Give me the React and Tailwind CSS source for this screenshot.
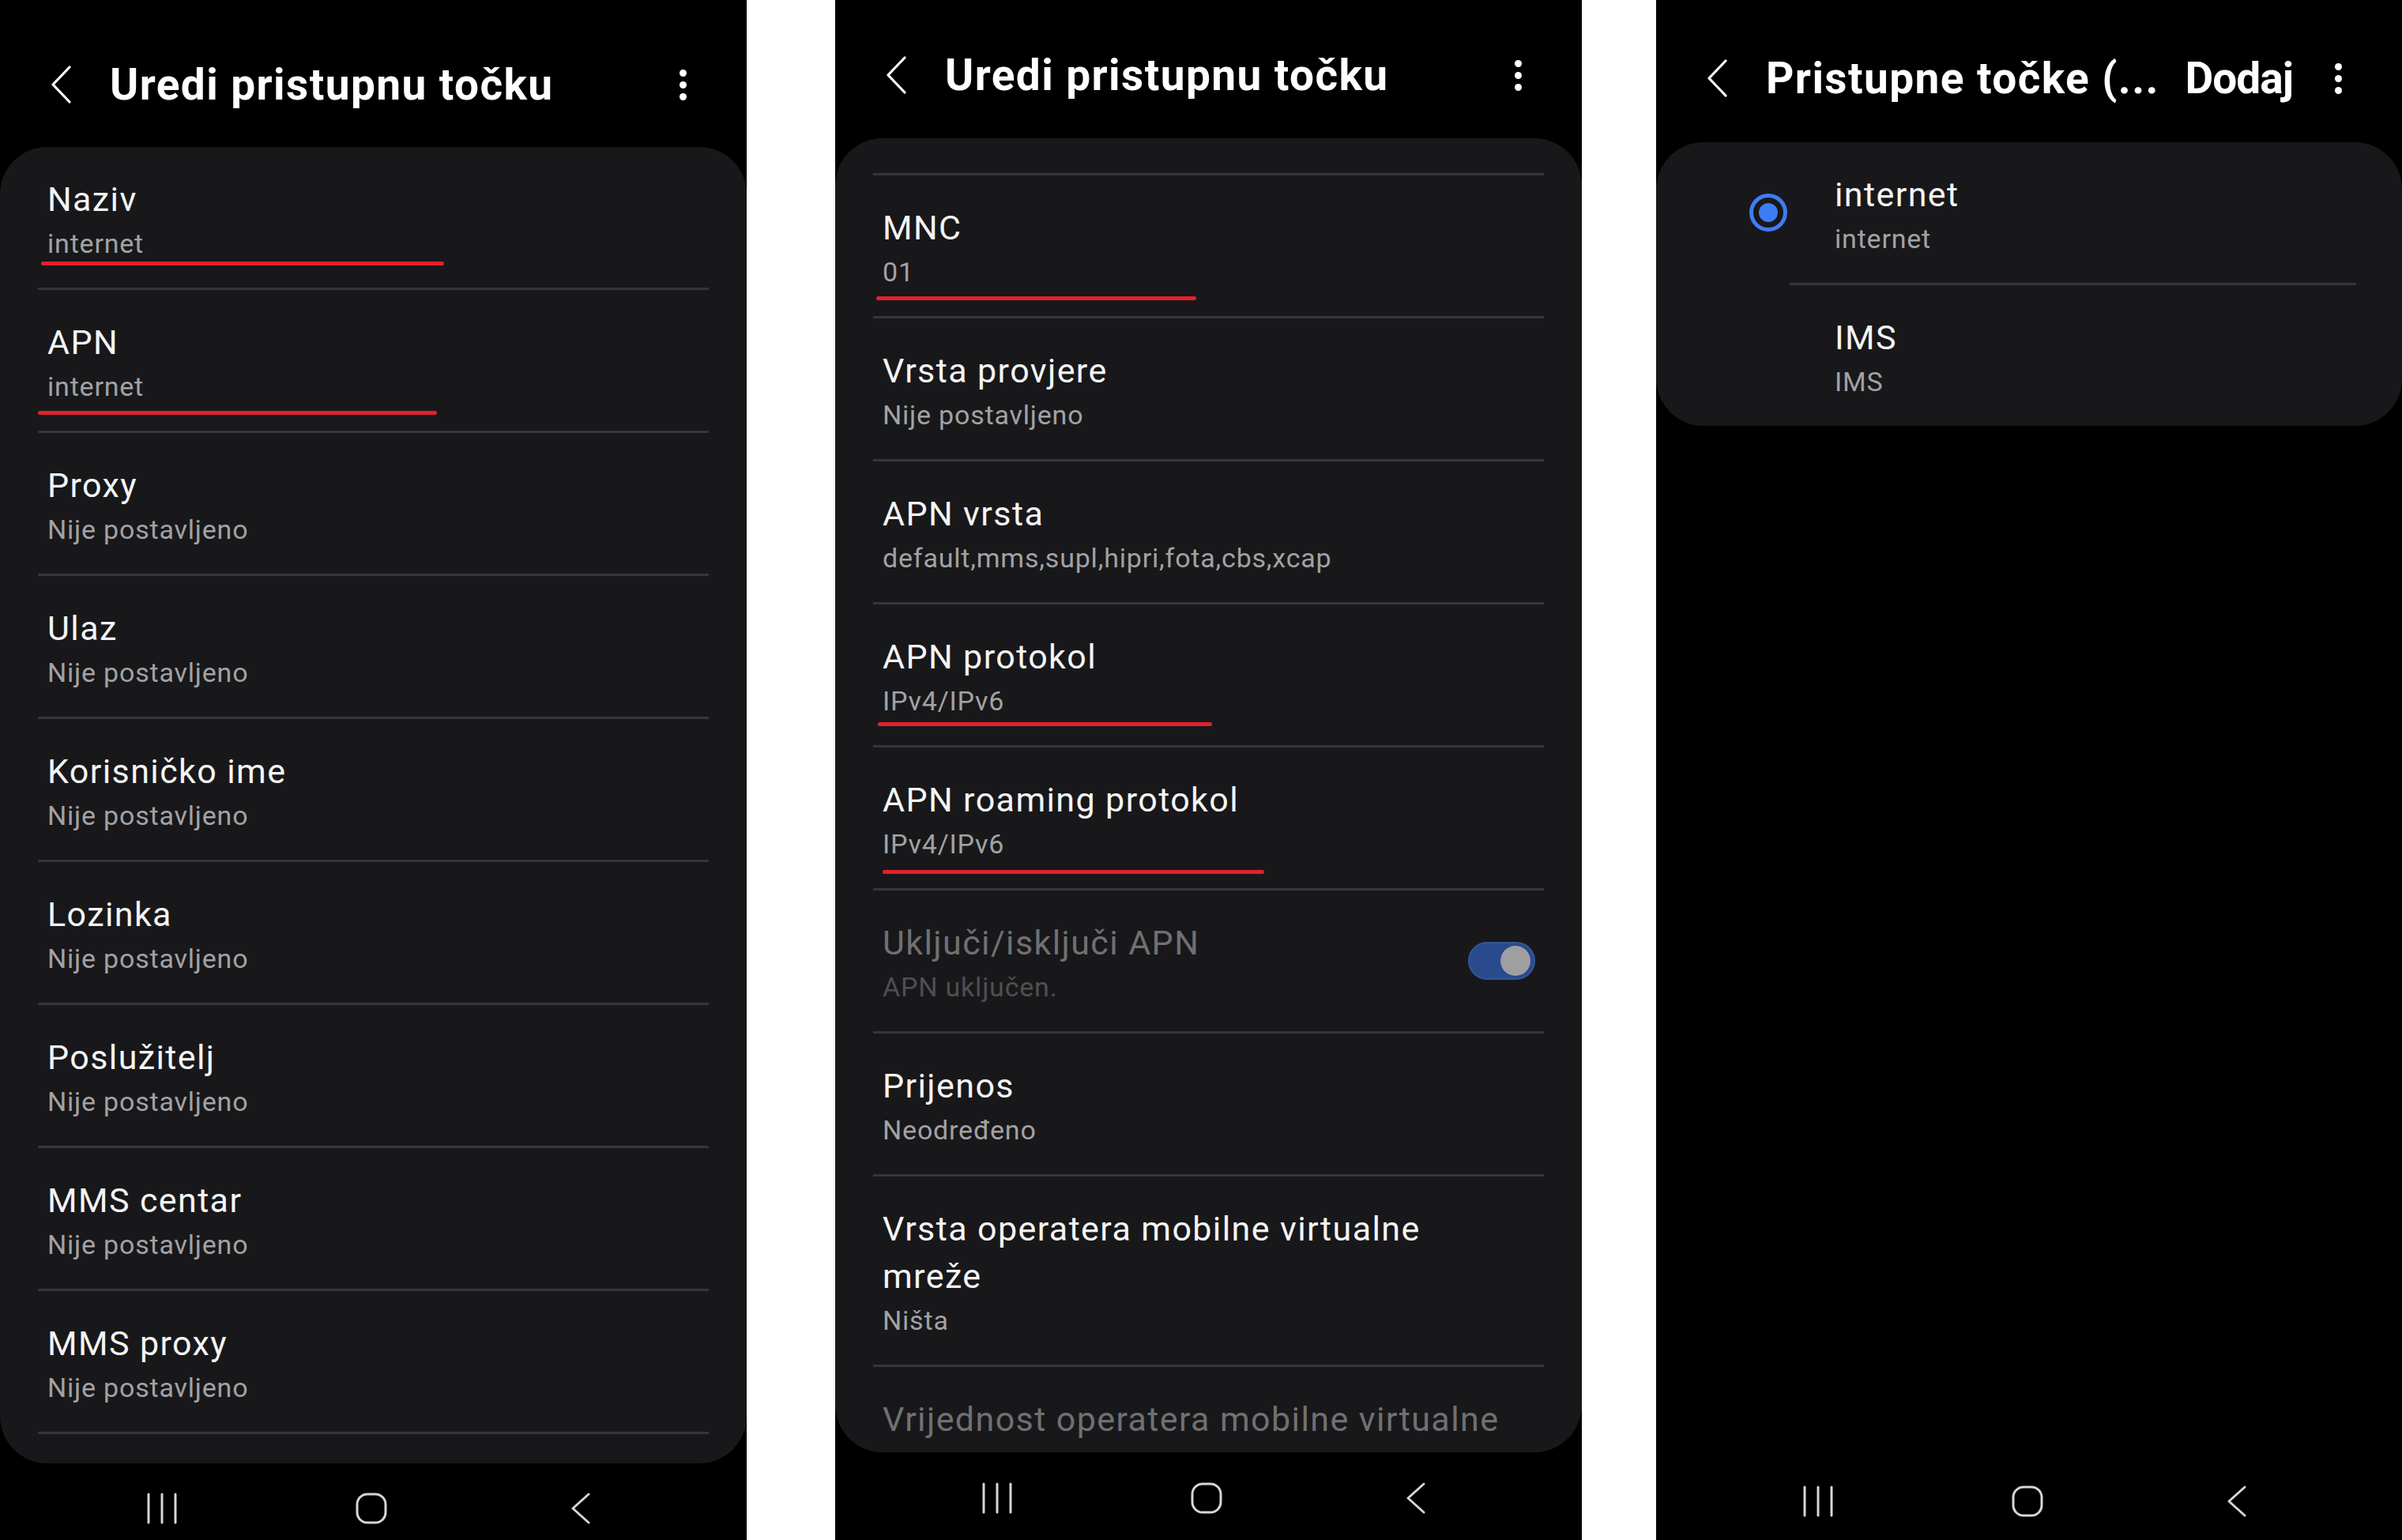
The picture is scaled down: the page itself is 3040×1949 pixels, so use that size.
import React from "react";

const FONT = "font-['Roboto','Liberation_Sans',sans-serif]";

// --- icons ---
function Chevron({ className = "" }) {
  return (
    <svg width="27" height="48" viewBox="0 0 27 48" fill="none" className={className}>
      <polyline
        points="24,2 3,24 24,46"
        stroke="currentColor"
        strokeWidth="3.2"
        strokeLinecap="round"
        strokeLinejoin="round"
      />
    </svg>
  );
}

function Kebab() {
  return (
    <div className="flex w-[10px] flex-col items-center gap-[6px]">
      <span className="h-[9px] w-[9px] rounded-full bg-white" />
      <span className="h-[9px] w-[9px] rounded-full bg-white" />
      <span className="h-[9px] w-[9px] rounded-full bg-white" />
    </div>
  );
}

function NavBar({ mb }) {
  return (
    <div className={`mt-auto flex h-[80px] items-center pl-[155px] gap-[165px] text-[#d6d6d6] ${mb}`}>
      <div className="flex w-[100px] justify-center">
        <svg width="40" height="40" viewBox="0 0 40 40" fill="none">
          <path d="M3 2v36M20 2v36M37 2v36" stroke="currentColor" strokeWidth="3" strokeLinecap="round" />
        </svg>
      </div>
      <div className="flex w-[100px] justify-center">
        <svg width="40" height="40" viewBox="0 0 40 40" fill="none">
          <rect x="2" y="2" width="36" height="36" rx="13" stroke="currentColor" strokeWidth="3" />
        </svg>
      </div>
      <div className="flex w-[100px] justify-center">
        <svg width="26" height="40" viewBox="0 0 26 40" fill="none">
          <polyline points="23,2 3,20 23,38" stroke="currentColor" strokeWidth="3" strokeLinecap="round" strokeLinejoin="round" />
        </svg>
      </div>
    </div>
  );
}

function Header({ title, h, pt, action }) {
  return (
    <div className={`${h} ${pt} shrink-0`}>
      <div className="flex h-[60px] items-center pl-[64px] pr-[76px] text-white">
        <Chevron />
        <div className="ml-[48px] flex-1 whitespace-nowrap text-[55px] font-bold leading-[60px] tracking-[1.4px]">
          {title}
        </div>
        {action && (
          <div className="mr-[52px] text-[55px] font-bold leading-[60px] tracking-[-1px]">{action}</div>
        )}
        <Kebab />
      </div>
    </div>
  );
}

function Divider() {
  return <div className="mx-[48px] h-[3px] bg-[#363638]" />;
}

const TITLE = "text-[43px] leading-[60px] tracking-[1.4px]";
const SUB = "text-[34px] leading-[52px] tracking-[0.8px]";

function Row({ title, sub, red, disabled, toggle, divider = true }) {
  return (
    <div>
      <div className="relative flex items-center pr-[59px]">
        <div className="flex-1 pl-[60px] pt-[36px] pb-[30px]">
          <div className={`whitespace-nowrap ${TITLE} ${disabled ? "text-[#707072]" : "text-[#f4f4f4]"}`}>
            {title}
          </div>
          {sub && (
            <div className={`${SUB} ${disabled ? "text-[#4f4f51]" : "text-[#a2a2a4]"}`}>{sub}</div>
          )}
        </div>
        {toggle && (
          <div className="flex h-[48px] w-[85px] items-center justify-end rounded-full border-[2px] border-[#34559c] bg-[#2a4a8e] pr-[4px]">
            <span className="h-[38px] w-[38px] rounded-full bg-[#9f9fa1]" />
          </div>
        )}
        {red && (
          <span
            className="absolute h-[5px] rounded-full bg-[#e3212b]"
            style={{ left: red.left, width: red.width, top: 120 + red.dy }}
          />
        )}
      </div>
      {divider && <Divider />}
    </div>
  );
}

const NS = "Nije postavljeno";

export default function App() {
  return (
    <div className={`flex h-[1949px] w-[3040px] bg-white ${FONT}`}>
      {/* PANEL 1 */}
      <div className="flex h-full w-[945px] flex-col bg-black">
        <Header title="Uredi pristupnu točku" h="h-[186px]" pt="pt-[77px]" />
        <div className="h-[1666px] shrink-0 overflow-hidden rounded-[60px] bg-[#18181a]">
          <Row title="Naziv" sub="internet" red={{ left: 52, width: 510, dy: 25 }} />
          <Row title="APN" sub="internet" red={{ left: 48, width: 505, dy: 33 }} />
          <Row title="Proxy" sub={NS} />
          <Row title="Ulaz" sub={NS} />
          <Row title="Korisničko ime" sub={NS} />
          <Row title="Lozinka" sub={NS} />
          <Row title="Poslužitelj" sub={NS} />
          <Row title="MMS centar" sub={NS} />
          <Row title="MMS proxy" sub={NS} />
        </div>
        <NavBar mb="mb-0" />
      </div>

      <div className="w-[112px] shrink-0" />

      {/* PANEL 2 */}
      <div className="flex h-full w-[945px] flex-col bg-black">
        <Header title="Uredi pristupnu točku" h="h-[175px]" pt="pt-[65px]" />
        <div className="h-[1663px] shrink-0 overflow-hidden rounded-[60px] bg-[#18181a]">
          <div className="h-[44px]" />
          <Divider />
          <Row title="MNC" sub="01" red={{ left: 52, width: 405, dy: 33 }} />
          <Row title="Vrsta provjere" sub={NS} />
          <Row title="APN vrsta" sub="default,mms,supl,hipri,fota,cbs,xcap" />
          <Row title="APN protokol" sub="IPv4/IPv6" red={{ left: 54, width: 423, dy: 29 }} />
          <Row title="APN roaming protokol" sub="IPv4/IPv6" red={{ left: 60, width: 483, dy: 35 }} />
          <Row title="Uključi/isključi APN" sub="APN uključen." disabled toggle />
          <Row title="Prijenos" sub="Neodređeno" />
          <Row
            title={
              <>
                Vrsta operatera mobilne virtualne
                <br />
                mreže
              </>
            }
            sub="Ništa"
          />
          <Row title="Vrijednost operatera mobilne virtualne" disabled divider={false} />
        </div>
        <NavBar mb="mb-[13px]" />
      </div>

      <div className="w-[94px] shrink-0" />

      {/* PANEL 3 */}
      <div className="flex h-full w-[944px] flex-col bg-black">
        <Header title="Pristupne točke (..." action="Dodaj" h="h-[180px]" pt="pt-[69px]" />
        <div className="shrink-0 overflow-hidden rounded-[60px] bg-[#18181a]">
          <div className="flex items-center">
            <div className="flex w-[226px] shrink-0 pl-[118px]">
              <span className="flex h-[48px] w-[48px] shrink-0 items-center justify-center rounded-full border-[5px] border-[#3f7cf4]">
                <span className="h-[24px] w-[24px] rounded-full bg-[#3f7cf4]" />
              </span>
            </div>
            <div className="pt-[36px] pb-[30px]">
              <div className={`${TITLE} text-[#f4f4f4]`}>internet</div>
              <div className={`${SUB} text-[#a2a2a4]`}>internet</div>
            </div>
          </div>
          <div className="ml-[169px] mr-[58px] h-[3px] bg-[#363638]" />
          <div className="pl-[226px] pt-[36px] pb-[30px]">
            <div className={`${TITLE} text-[#f4f4f4]`}>IMS</div>
            <div className={`${SUB} text-[#a2a2a4]`}>IMS</div>
          </div>
        </div>
        <NavBar mb="mb-[9px]" />
      </div>
    </div>
  );
}
